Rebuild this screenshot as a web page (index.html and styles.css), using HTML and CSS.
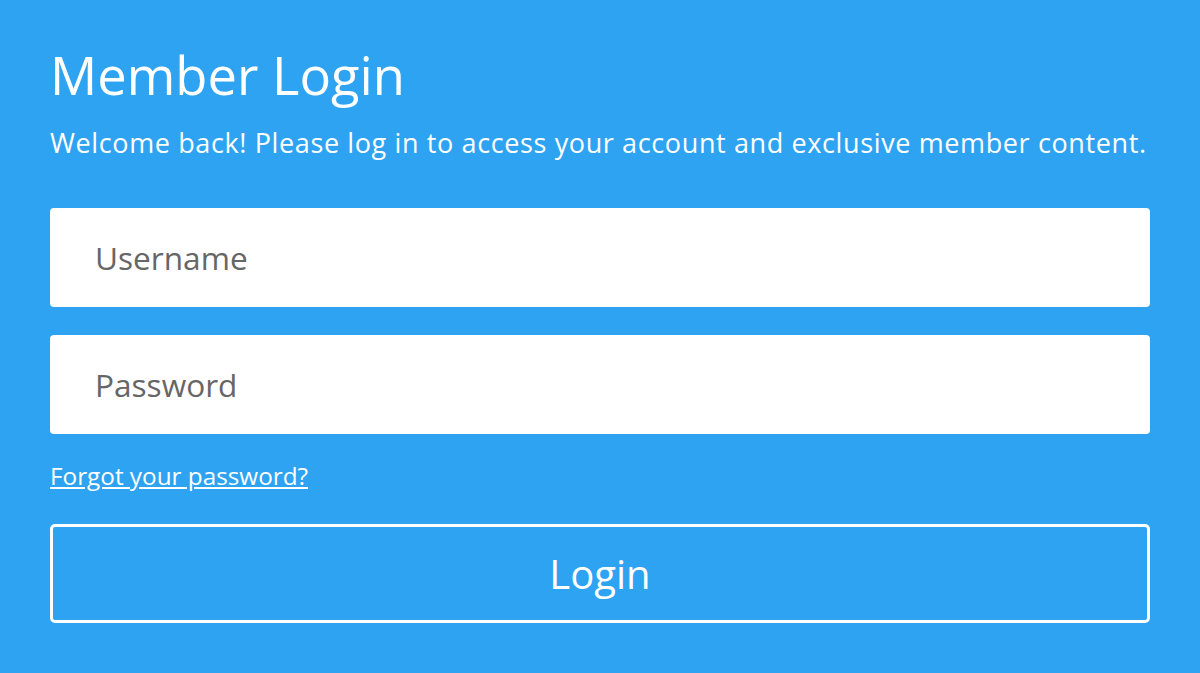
FILE: index.html
```html
<!DOCTYPE html>
<html lang="en">
<head>
<meta charset="utf-8">
<title>Member Login</title>
<link rel="stylesheet" href="styles.css">
</head>
<body>
<main class="login">
  <h1 class="login-title">Member Login</h1>
  <p class="login-intro">Welcome back! Please log in to access your account and exclusive member content.</p>
  <form class="login-form">
    <input class="login-input" type="text" placeholder="Username">
    <input class="login-input" type="password" placeholder="Password">
    <a class="login-forgot" href="#">Forgot your password?</a>
    <button class="login-button" type="button">Login</button>
  </form>
</main>
</body>
</html>
```

FILE: styles.css
```css
html, body {
  margin: 0;
  padding: 0;
  height: 100%;
}
body {
  background: #2ea3f2;
  font-family: "Open Sans", "Noto Sans", sans-serif;
  color: #fff;
}
.login {
  padding: 42px 50px 0 50px;
}
.login-title {
  margin: 0;
  font-size: 52.5px;
  font-weight: 400;
  line-height: 66px;
}
.login-intro {
  margin: 17px 0 0 0;
  font-size: 27px;
  line-height: 36px;
  letter-spacing: 0.62px;
  white-space: nowrap;
}
.login-form {
  display: flex;
  flex-direction: column;
  margin-top: 47px;
}
.login-input {
  box-sizing: border-box;
  height: 99px;
  border: none;
  border-radius: 4px;
  background: #fff;
  padding: 0 45px;
  font-family: inherit;
  font-size: 31.6px;
  color: #666;
  margin-bottom: 28px;
  outline: none;
}
.login-input::placeholder {
  color: #666;
}
.login-forgot {
  align-self: flex-start;
  color: #fff;
  font-size: 24.3px;
  line-height: 32px;
  text-decoration: underline;
  margin-top: -2px;
}
.login-button {
  margin-top: 32px;
  box-sizing: border-box;
  height: 99px;
  border: 3px solid #fff;
  border-radius: 5px;
  background: transparent;
  color: #fff;
  font-family: inherit;
  font-size: 40px;
  cursor: pointer;
}
```
